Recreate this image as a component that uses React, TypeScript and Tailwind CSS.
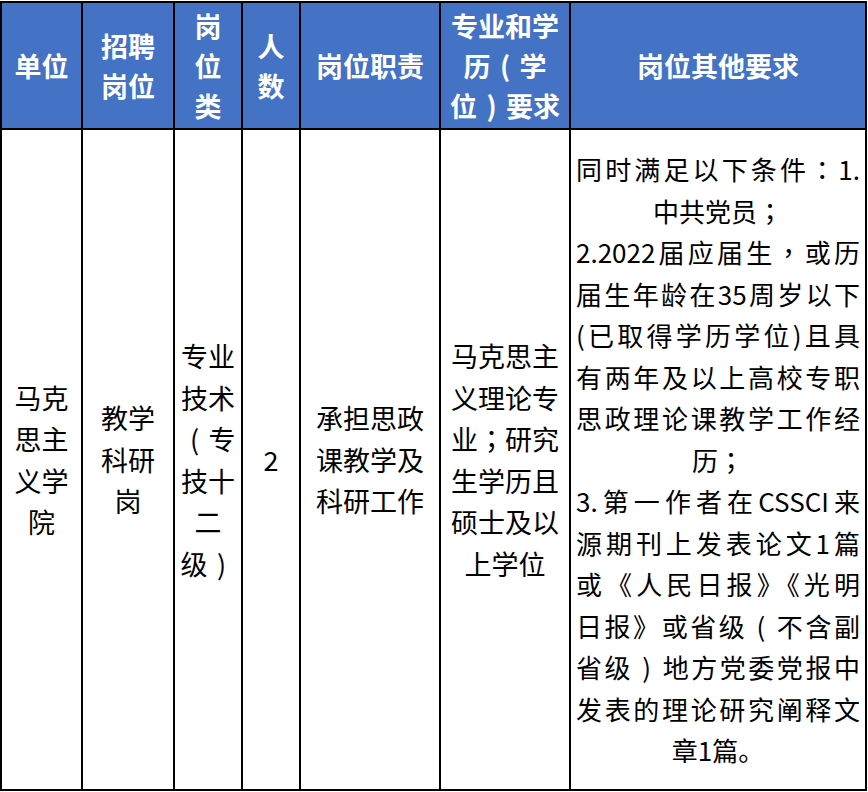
const headers: string[][] = [
  ["单位"],
  ["招聘", "岗位"],
  ["岗", "位", "类"],
  ["人", "数"],
  ["岗位职责"],
  ["专业和学", "历（学", "位）要求"],
  ["岗位其他要求"],
]

const cells: string[][] = [
  ["马克", "思主", "义学", "院"],
  ["教学", "科研", "岗"],
  ["专业", "技术", "（专", "技十", "二", "级）"],
  ["2"],
  ["承担思政", "课教学及", "科研工作"],
  ["马克思主", "义理论专", "业；研究", "生学历且", "硕士及以", "上学位"],
]

// 岗位其他要求: justified paragraphs, the last line of each one centred
const other: [string, boolean][] = [
  ["同时满足以下条件：1.", true],
  ["中共党员；", false],
  ["2.2022届应届生，或历", true],
  ["届生年龄在35周岁以下", true],
  ["(已取得学历学位)且具", true],
  ["有两年及以上高校专职", true],
  ["思政理论课教学工作经", true],
  ["历；", false],
  ["3.第一作者在CSSCI来", true],
  ["源期刊上发表论文1篇", true],
  ["或《人民日报》《光明", true],
  ["日报》或省级（不含副", true],
  ["省级）地方党委党报中", true],
  ["发表的理论研究阐释文", true],
  ["章1篇。", false],
]

const widths = ["w-[81px]", "w-[92px]", "w-[68px]", "w-[58px]", "w-[140px]", "w-[130px]", "w-[296px]"]

// centred full-width punctuation, as in the source sheet
function Text({ s }: { s: string }) {
  const parts = s.split(/([，；：（）《》])/)
  return (
    <>
      {parts.map((p, i) => {
        if (p === "（" || p === "）")
          return (
            <span key={i} className="px-[0.35em]">
              {p === "（" ? "(" : ")"}
            </span>
          )
        if (/^[，；：《》]$/.test(p))
          return (
            <span key={i} className="font-['Noto_Sans_CJK_TC',sans-serif]">
              {p}
            </span>
          )
        return p
      })}
    </>
  )
}

function Lines({ lines }: { lines: string[] }) {
  return (
    <>
      {lines.map((l, i) => (
        <span key={i} className="block whitespace-nowrap">
          <Text s={l} />
        </span>
      ))}
    </>
  )
}

export default function App() {
  return (
    <div className="bg-white w-[868px] h-[792px] pt-[1px] font-['Noto_Sans_CJK_SC',sans-serif]">
      <table className="table-fixed border-collapse w-[867px]">
        <colgroup>
          {widths.map((w, i) => (
            <col key={i} className={w} />
          ))}
        </colgroup>
        <thead>
          <tr className="h-[127px]">
            {headers.map((h, i) => (
              <th
                key={i}
                className="border-2 border-black bg-[#4472c4] text-white font-bold text-[27px] leading-[40px] text-center align-middle p-0"
              >
                <Lines lines={h} />
              </th>
            ))}
          </tr>
        </thead>
        <tbody>
          <tr className="h-[661px]">
            {cells.map((c, i) => (
              <td
                key={i}
                className="border-2 border-black text-black text-[27px] leading-[41.5px] text-center align-middle p-0"
              >
                <Lines lines={c} />
              </td>
            ))}
            <td className="border-2 border-black text-black text-[26px] leading-[41.5px] align-middle p-0">
              {other.map(([l, full], i) =>
                full ? (
                  <span
                    key={i}
                    className="block w-[284px] mx-auto whitespace-nowrap text-justify [text-align-last:justify]"
                  >
                    <Text s={l} />
                  </span>
                ) : (
                  <span key={i} className="block whitespace-nowrap text-center">
                    <Text s={l} />
                  </span>
                )
              )}
            </td>
          </tr>
        </tbody>
      </table>
    </div>
  )
}
